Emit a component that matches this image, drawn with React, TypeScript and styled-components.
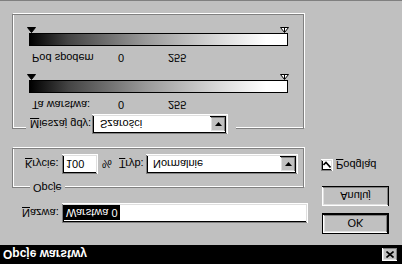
import React from "react";
import styled, { createGlobalStyle } from "styled-components";

const Global = createGlobalStyle`
  html, body { margin: 0; padding: 0; background: #c0c0c0; }
  body { font-family: "Liberation Sans", Arial, sans-serif; font-size: 11px; color: #000; }
  * { box-sizing: border-box; }
  u { text-decoration-thickness: 1px; text-underline-offset: 1px; }
`;

const raised = `box-shadow: inset -1px -1px #000, inset 1px 1px #fff, inset -2px -2px #808080, inset 2px 2px #dfdfdf;`;
const sunken = `box-shadow: inset -1px -1px #fff, inset 1px 1px #808080, inset -2px -2px #dfdfdf, inset 2px 2px #000;`;

const Flip = styled.div`
  width: 402px;
  height: 264px;
  transform: scaleY(-1);
`;

const Window = styled.div`
  width: 402px;
  height: 264px;
  background: #c0c0c0;
  display: flex;
  flex-direction: column;
  border-bottom: 1px solid #808080;
  overflow: hidden;
`;

const TitleBar = styled.div`
  height: 19px;
  flex-shrink: 0;
  background: #000;
  display: flex;
  align-items: center;
  justify-content: space-between;
  padding: 0 4px 0 3px;
`;

const TitleText = styled.span`
  color: #fff;
  font-weight: bold;
  font-size: 12px;
`;

const CloseBtn = styled.div`
  width: 16px;
  height: 14px;
  background: #c0c0c0;
  ${raised}
  display: flex;
  align-items: center;
  justify-content: center;
`;

const Body = styled.div`
  flex: 1;
  display: flex;
  padding-left: 12px;
`;

const LeftCol = styled.div`
  width: 293px;
  display: flex;
  flex-direction: column;
  padding-top: 22px;
`;

const NameRow = styled.div`
  display: flex;
  align-items: center;
  height: 20px;
  padding-left: 10px;
`;

const Label = styled.span<{ w?: number }>`
  ${(p) => (p.w ? `width: ${p.w}px;` : "")}
  flex-shrink: 0;
  white-space: nowrap;
`;

const Field = styled.div<{ w: number }>`
  width: ${(p) => p.w}px;
  height: 20px;
  flex-shrink: 0;
  background: #fff;
  ${sunken}
  display: flex;
  align-items: center;
  padding: 0 2px 0 2px;
  white-space: nowrap;
`;

const Selected = styled.span`
  background: #000;
  color: #fff;
  padding: 1px 2px;
  line-height: 13px;
`;

const FieldText = styled.span<{ pad?: number }>`
  padding-left: ${(p) => p.pad ?? 2}px;
`;

const DropBtn = styled.div`
  margin-left: auto;
  width: 16px;
  height: 16px;
  background: #c0c0c0;
  ${raised}
  display: flex;
  align-items: center;
  justify-content: center;
`;

const Group = styled.div<{ h: number; mt: number }>`
  position: relative;
  width: 292px;
  height: ${(p) => p.h}px;
  margin-top: ${(p) => p.mt}px;
  border: 1px solid #808080;
  box-shadow: 1px 1px 0 #fff, inset 1px 1px 0 #fff;
`;

const OptionsInner = styled.div`
  padding: 13px 0 0 12px;
  display: flex;
  align-items: center;
`;

const Legend = styled.div<{ top: number; left: number; pad: string }>`
  position: absolute;
  top: ${(p) => p.top}px;
  left: ${(p) => p.left}px;
  padding: ${(p) => p.pad};
  background: #c0c0c0;
  display: flex;
  align-items: center;
  line-height: 13px;
`;

const Percent = styled.span`
  width: 21px;
  padding-left: 4px;
  flex-shrink: 0;
`;

const BlendInner = styled.div`
  padding: 16px 0 0 16px;
  display: flex;
  flex-direction: column;
`;

const Slider = styled.div<{ mt: number }>`
  margin-top: ${(p) => p.mt}px;
  display: flex;
  flex-direction: column;
`;

const SliderLabels = styled.div`
  height: 14px;
  line-height: 14px;
  padding-left: 3px;
  display: grid;
  grid-template-columns: 86px 50px auto;
`;

const Bar = styled.div`
  margin-top: 5px;
  width: 259px;
  height: 13px;
  border: 1px solid #000;
  background: linear-gradient(to right, #000 0%, #444 15%, #999 45%, #ddd 75%, #fff 92%);
`;

const TriRow = styled.div`
  width: 262px;
  height: 6px;
  margin-left: -2px;
  display: flex;
  justify-content: space-between;
`;

const RightCol = styled.div`
  width: 67px;
  margin-left: 17px;
  padding-top: 11px;
  display: flex;
  flex-direction: column;
`;

const Button = styled.div<{ primary?: boolean; mt?: number }>`
  width: 67px;
  height: ${(p) => (p.primary ? 21 : 20)}px;
  margin-top: ${(p) => p.mt ?? 0}px;
  background: #c0c0c0;
  display: flex;
  align-items: center;
  justify-content: center;
  ${(p) =>
    p.primary
      ? `border: 1px solid #000; box-shadow: inset -1px -1px #000, inset 1px 1px #fff, inset -2px -2px #808080, inset 2px 2px #dfdfdf;`
      : raised}
`;

const CheckRow = styled.div`
  margin-top: 15px;
  margin-left: -1px;
  display: flex;
  align-items: center;
  gap: 3px;
`;

const CheckBox = styled.div`
  width: 12px;
  height: 12px;
  background: #fff;
  ${sunken}
  display: flex;
  align-items: center;
  justify-content: center;
`;

const Arrow = () => (
  <svg width="7" height="4" viewBox="0 0 7 4">
    <polygon points="0,0 7,0 3.5,4" fill="#000" />
  </svg>
);

const Tri = ({ filled }: { filled?: boolean }) => (
  <svg width="9" height="6" viewBox="0 0 9 6">
    <polygon points="0.5,5.5 4.5,0.5 8.5,5.5" fill={filled ? "#000" : "#fff"} stroke="#000" strokeWidth="1" />
    {!filled && <line x1="4.5" y1="1" x2="4.5" y2="5.5" stroke="#000" strokeWidth="1" />}
  </svg>
);

const SliderBlock = ({ label, mt }: { label: string; mt: number }) => (
  <Slider mt={mt}>
    <SliderLabels>
      <span>{label}</span>
      <span>0</span>
      <span>255</span>
    </SliderLabels>
    <Bar />
    <TriRow>
      <Tri filled />
      <Tri />
    </TriRow>
  </Slider>
);

export default function App() {
  return (
    <>
      <Global />
      <Flip>
        <Window>
          <TitleBar>
            <TitleText>Opcje warstwy</TitleText>
            <CloseBtn>
              <svg width="8" height="7" viewBox="0 0 8 7">
                <path d="M0.5 0.5 L7.5 6.5 M7.5 0.5 L0.5 6.5" stroke="#000" strokeWidth="1.6" />
              </svg>
            </CloseBtn>
          </TitleBar>
          <Body>
            <LeftCol>
              <NameRow>
                <Label w={40}>
                  <u>N</u>azwa:
                </Label>
                <Field w={246}>
                  <Selected>Warstwa 0</Selected>
                </Field>
              </NameRow>

              <Group h={40} mt={15}>
                <Legend top={-7} left={17} pad="0 3px">
                  Opcje
                </Legend>
                <OptionsInner>
                  <Label w={37}>
                    <u>K</u>rycie:
                  </Label>
                  <Field w={36}>
                    <FieldText>100</FieldText>
                  </Field>
                  <Percent>%</Percent>
                  <Label w={27}>
                    <u>T</u>ryb:
                  </Label>
                  <Field w={152}>
                    <FieldText pad={5}>Normalnie</FieldText>
                    <DropBtn>
                      <Arrow />
                    </DropBtn>
                  </Field>
                </OptionsInner>
              </Group>

              <Group h={115} mt={19}>
                <Legend top={-6} left={13} pad="0 8px 0 4px">
                  <Label w={62}>
                    <u>M</u>ieszaj gdy:
                  </Label>
                  <Field w={136}>
                    <FieldText pad={6}>Szarości</FieldText>
                    <DropBtn>
                      <Arrow />
                    </DropBtn>
                  </Field>
                </Legend>
                <BlendInner>
                  <SliderBlock label="Ta warstwa:" mt={0} />
                  <SliderBlock label="Pod spodem" mt={9} />
                </BlendInner>
              </Group>
            </LeftCol>

            <RightCol>
              <Button primary>OK</Button>
              <Button mt={7}>Anuluj</Button>
              <CheckRow>
                <CheckBox>
                  <svg width="8" height="7" viewBox="0 0 8 7">
                    <path d="M0.5 3 L3 5.5 L7.5 0.5" fill="none" stroke="#000" strokeWidth="1.6" />
                  </svg>
                </CheckBox>
                <span>
                  <u>P</u>odgląd
                </span>
              </CheckRow>
            </RightCol>
          </Body>
        </Window>
      </Flip>
    </>
  );
}
